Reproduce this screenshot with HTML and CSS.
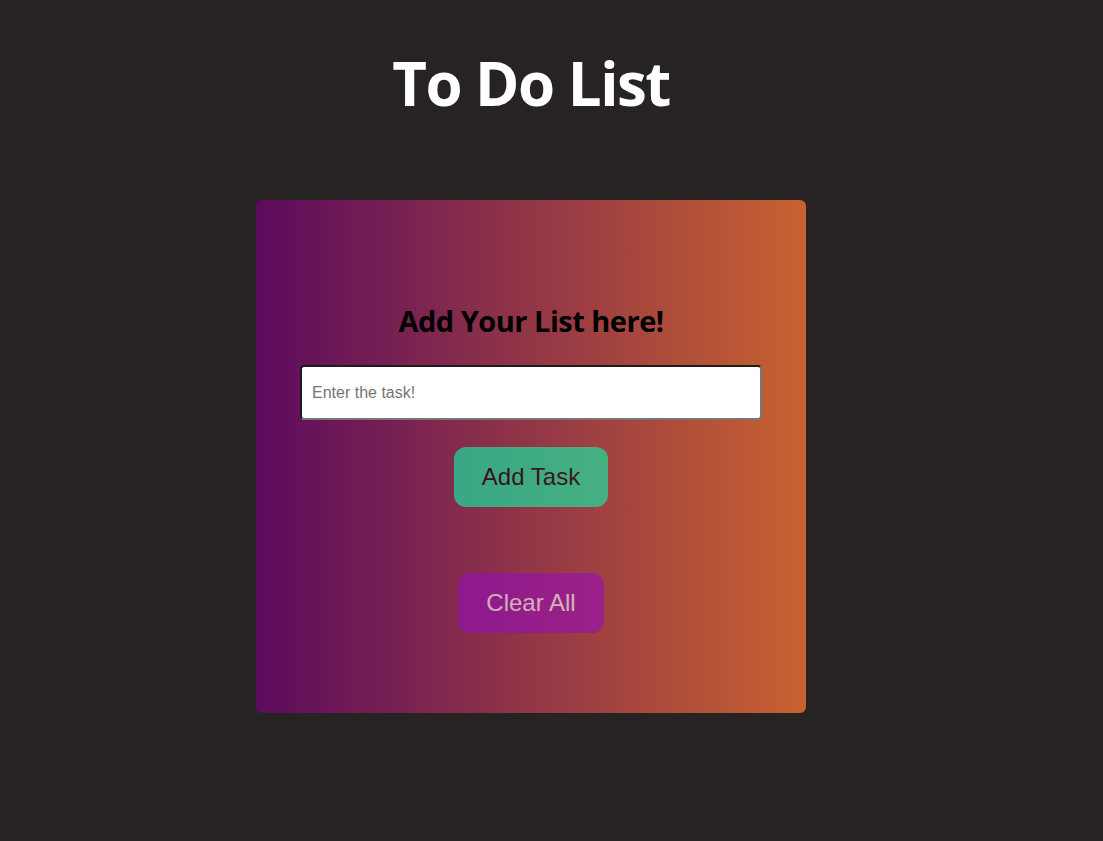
FILE: index.html
```html
<!DOCTYPE html>
<html lang="en">
<head>
<meta charset="utf-8">
<title>To Do List</title>
<link rel="stylesheet" href="styles.css">
</head>
<body>
<main class="page">
  <h1 class="title">To Do List</h1>
  <section class="card">
    <h2 class="card-heading">Add Your List here!</h2>
    <input class="task-input" type="text" placeholder="Enter the task!">
    <button class="btn btn-add" type="button">Add Task</button>
    <ul class="task-list"></ul>
    <button class="btn btn-clear" type="button">Clear All</button>
  </section>
</main>
</body>
</html>
```

FILE: styles.css
```css
html, body {
  margin: 0;
  padding: 0;
  background: #272322;
  min-height: 100%;
}

body {
  font-family: "Open Sans", "Noto Sans", sans-serif;
}

.page {
  display: flex;
  flex-direction: column;
  align-items: center;
  padding-right: 41px;
  padding-top: 45px;
}

.title {
  margin: 0;
  font-size: 60px;
  line-height: 77px;
  font-weight: 700;
  color: #ffffff;
  letter-spacing: -1.5px;
}

.card {
  margin-top: 78px;
  width: 550px;
  box-sizing: border-box;
  padding: 103px 44px 80px;
  border-radius: 6px;
  background: linear-gradient(to right, #5c0a5e, #c8622f);
  display: flex;
  flex-direction: column;
  align-items: center;
}

.card-heading {
  margin: 0;
  font-size: 29px;
  line-height: 36px;
  font-weight: 700;
  color: #000000;
  letter-spacing: -0.5px;
}

.task-input {
  margin-top: 26px;
  width: 462px;
  height: 55px;
  box-sizing: border-box;
  padding: 0 10px;
  border: 2px solid;
  border-color: #1c1c1c #777777 #777777 #1c1c1c;
  border-radius: 4px;
  background: #ffffff;
  font-family: "Liberation Sans", Arial, sans-serif;
  font-size: 16px;
  color: #222;
}

.task-input::placeholder {
  color: #757575;
}

.task-list {
  margin: 0;
  padding: 0;
  list-style: none;
}

.btn {
  border: none;
  border-radius: 12px;
  padding: 17px 28px;
  font-family: "Liberation Sans", Arial, sans-serif;
  font-size: 24px;
  line-height: 26px;
  opacity: 0.6;
  cursor: pointer;
}

.btn-add {
  margin-top: 27px;
  background: rgb(10, 250, 172);
  color: #000000;
}

.btn-clear {
  margin-top: 66px;
  background: rgb(150, 14, 185);
  color: #ffffff;
}
```
